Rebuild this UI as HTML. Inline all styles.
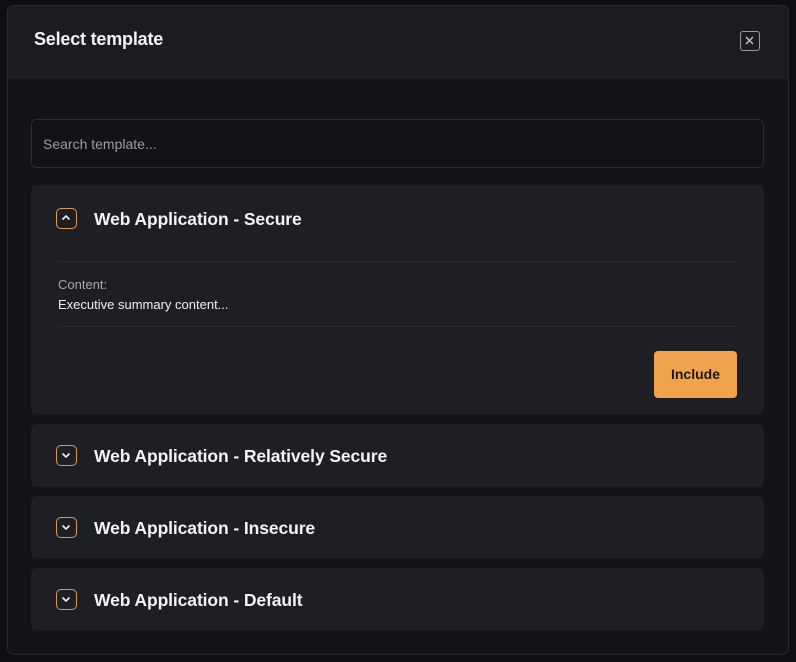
<!DOCTYPE html>
<html><head><style>
*{box-sizing:border-box;margin:0;padding:0}
body{width:796px;height:662px;background:#0e0f12;font-family:"Liberation Sans",sans-serif;position:relative;overflow:hidden}
.modal{position:absolute;left:7px;top:5px;width:782px;height:650px;background:#131419;border:1px solid #2a2b31;border-radius:7px;overflow:hidden}
.hdr{position:absolute;left:0;top:0;width:100%;height:73px;background:#1b1c22}
.hdr h1{position:absolute;left:26px;top:23px;font-size:18px;font-weight:bold;color:#f2f2f2;letter-spacing:-0.2px}
.close{position:absolute;left:732px;top:25px;width:20px;height:20px;border:1.5px solid #9a9a9e;border-radius:3px}
.search{position:absolute;left:23px;top:113px;width:733px;height:49px;border:1px solid #2c2d33;border-radius:5px;background:#121318;color:#9c9ca0;font-size:14px;padding:16px 11px}
.card{position:absolute;left:23px;width:733px;background:#1e1f24;border-radius:6px}
.ic{position:absolute;left:25px;width:21px;height:21px;border:1.5px solid #e0994a;border-radius:5px}
.t{position:absolute;left:63px;font-size:17.5px;font-weight:bold;color:#f4f4f4;letter-spacing:-0.1px}
.hr{position:absolute;left:27px;width:679px;height:1px;background:#2c2d33}
.btn{position:absolute;left:623px;top:166px;width:83px;height:47px;background:#f0a24d;border-radius:4px;color:#1a1a1a;font-size:14px;font-weight:bold;text-align:center;line-height:47px}
</style></head><body>
<div class="modal">
 <div class="hdr"><h1>Select template</h1>
  <div class="close"><svg width="17" height="17" viewBox="0 0 17 17" style="position:absolute;left:0;top:0"><path d="M5 5L12 12M12 5L5 12" stroke="#c8c8cc" stroke-width="1.3"/></svg></div></div>
 <div class="search">Search template...</div>
 <div class="card" style="top:179px;height:229px">
  <div class="ic" style="top:23px"><svg width="18" height="18" viewBox="0 0 18 18"><path d="M5.5 10.5L9 7L12.5 10.5" stroke="#f0f0f0" stroke-width="1.6" fill="none"/></svg></div>
  <div class="t" style="top:24px">Web Application - Secure</div>
  <div class="hr" style="top:76px"></div>
  <div style="position:absolute;left:27px;top:92px;font-size:13px;color:#a8a8ac">Content:</div>
  <div style="position:absolute;left:27px;top:112px;font-size:13px;color:#f0f0f0">Executive summary content...</div>
  <div class="hr" style="top:141px"></div>
  <div class="btn">Include</div>
 </div>
 <div class="card" style="top:418px;height:63px">
  <div class="ic" style="top:21px"><svg width="18" height="18" viewBox="0 0 18 18"><path d="M5.5 7.5L9 11L12.5 7.5" stroke="#f0f0f0" stroke-width="1.6" fill="none"/></svg></div>
  <div class="t" style="top:22px">Web Application - Relatively Secure</div></div>
 <div class="card" style="top:490px;height:62px">
  <div class="ic" style="top:21px"><svg width="18" height="18" viewBox="0 0 18 18"><path d="M5.5 7.5L9 11L12.5 7.5" stroke="#f0f0f0" stroke-width="1.6" fill="none"/></svg></div>
  <div class="t" style="top:22px">Web Application - Insecure</div></div>
 <div class="card" style="top:562px;height:62px">
  <div class="ic" style="top:21px"><svg width="18" height="18" viewBox="0 0 18 18"><path d="M5.5 7.5L9 11L12.5 7.5" stroke="#f0f0f0" stroke-width="1.6" fill="none"/></svg></div>
  <div class="t" style="top:22px">Web Application - Default</div></div>
</div>
</body></html>
